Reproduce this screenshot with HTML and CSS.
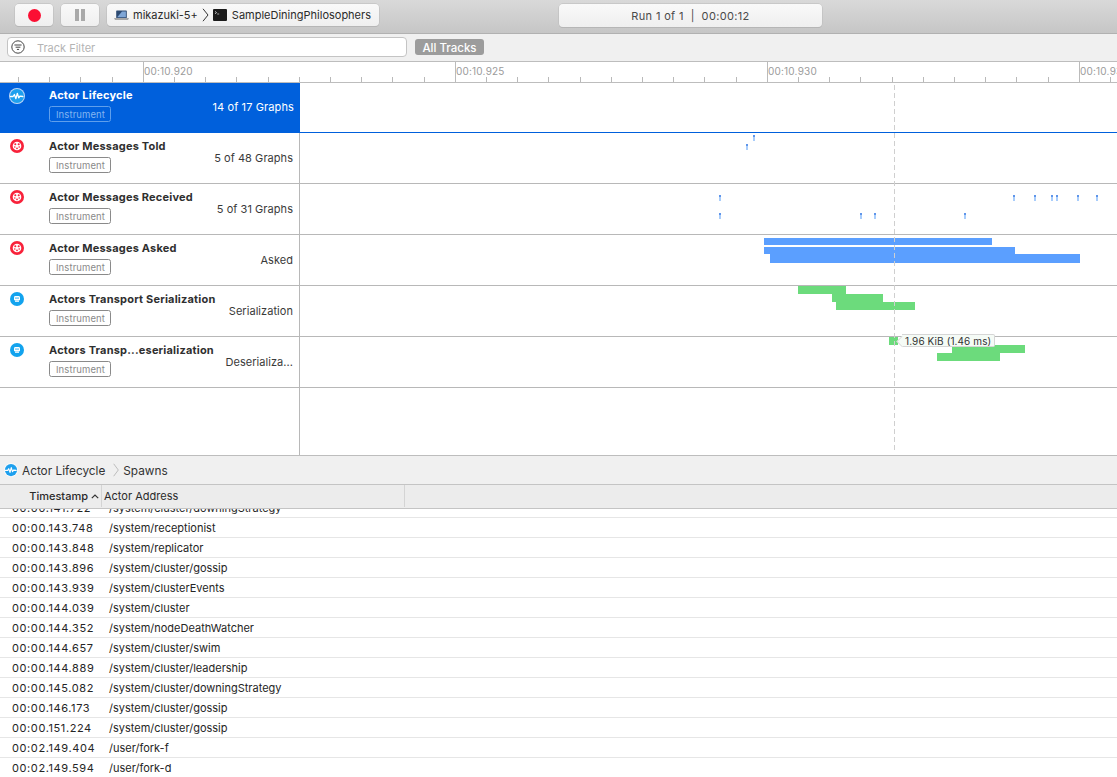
FILE: index.html
```html
<!DOCTYPE html>
<html lang="en">
<head>
<meta charset="utf-8">
<title>Instruments</title>
<link rel="stylesheet" href="styles.css">
</head>
<body>
<svg class="defs" width="0" height="0" aria-hidden="true">
  <symbol id="i-pulse" viewBox="0 0 16 16">
    <circle cx="8" cy="8" r="8" fill="#fff" fill-opacity=".75"/>
    <circle cx="8" cy="8" r="7" fill="#1ea0ee"/>
    <path d="M1.5 8.5h2.6l1.3-2 1.5 4.2 1.4-5.4 1.4 4.6 1.2-1.7 3 .3" fill="none" stroke="#fff" stroke-width="1.3" stroke-linejoin="round" stroke-linecap="round"/>
  </symbol>
  <symbol id="i-paw" viewBox="0 0 14 14">
    <circle cx="7" cy="7" r="7" fill="#f8223a"/>
    <circle cx="7" cy="7" r="4.3" fill="#fff"/>
    <circle cx="5.3" cy="5.2" r="1.05" fill="#f8223a"/>
    <circle cx="8.7" cy="5.2" r="1.05" fill="#f8223a"/>
    <circle cx="4.8" cy="8" r=".8" fill="#f8223a"/>
    <circle cx="9.2" cy="8" r=".8" fill="#f8223a"/>
    <circle cx="7" cy="9.3" r=".9" fill="#f8223a"/>
  </symbol>
  <symbol id="i-net" viewBox="0 0 14 14">
    <circle cx="7" cy="7" r="7" fill="#12a3ee"/>
    <rect x="4" y="4" width="6" height="4.6" rx="1.4" fill="#fff"/>
    <rect x="5.4" y="5.4" width="1.2" height="1.4" fill="#12a3ee"/>
    <rect x="7.4" y="5.4" width="1.2" height="1.4" fill="#12a3ee"/>
    <rect x="5" y="8.6" width="4" height="1.2" fill="#fff"/>
  </symbol>
</svg>

<header class="toolbar">
  <button class="tool-btn" type="button"><span class="record-dot"></span></button>
  <button class="tool-btn" type="button"><span class="pause-bar"></span><span class="pause-bar"></span></button>
  <div class="target">
    <svg class="laptop" viewBox="0 0 15 10" width="15" height="10">
      <rect x="2.2" y=".5" width="10.6" height="7.5" rx=".6" fill="#2c4a72"/>
      <path d="M3.2 7.2 8 1.4h3.9v5.8z" fill="#7fa6d6"/>
      <path d="M0 8.2h15l-1 1.6H1z" fill="#8c8c8c"/>
    </svg>
    <span class="target-text">mikazuki-5+</span>
    <svg class="crumb-chevron" viewBox="0 0 7 14" width="7" height="14"><path d="M1 .8 6 7l-5 6.2" fill="none" stroke="#333" stroke-width="1"/></svg>
    <svg class="terminal" viewBox="0 0 14 12" width="14" height="12">
      <rect width="14" height="12" rx="1" fill="#1b1b1b"/>
      <path d="M2 2.4 3.6 3.6 2 4.8" fill="none" stroke="#ddd" stroke-width=".8"/>
      <path d="M4.2 5h2" stroke="#ddd" stroke-width=".7"/>
    </svg>
    <span class="target-text">SampleDiningPhilosophers</span>
  </div>
  <div class="run-status">Run 1 of 1&nbsp;&nbsp;|&nbsp;&nbsp;00:00:12</div>
</header>

<div class="filterbar">
  <div class="filter-input">
    <svg class="filter-icon" viewBox="0 0 14 14" width="14" height="14">
      <circle cx="7" cy="7" r="6.2" fill="none" stroke="#444" stroke-width="1"/>
      <path d="M3.4 5h7.2M4.6 7.2h4.8M5.9 9.4h2.2" stroke="#444" stroke-width="1" fill="none"/>
    </svg>
    <span class="filter-placeholder">Track Filter</span>
  </div>
  <span class="all-tracks">All Tracks</span>
</div>

<div class="ruler">
  <span class="ruler-label" style="left:144px">00:10.920</span>
  <span class="ruler-label" style="left:456px">00:10.925</span>
  <span class="ruler-label" style="left:768px">00:10.930</span>
  <span class="ruler-label" style="left:1080px">00:10.935</span>
</div>

<section class="tracks">
  <div class="track track-selected">
    <div class="track-info">
      <svg class="track-icon track-icon-large"><use href="#i-pulse"/></svg>
      <div class="track-names">
        <div class="track-title">Actor Lifecycle</div>
        <div class="badge">Instrument</div>
      </div>
      <div class="track-meta">14 of 17 Graphs</div>
    </div>
    <div class="lane"></div>
  </div>

  <div class="track">
    <div class="track-info">
      <svg class="track-icon"><use href="#i-paw"/></svg>
      <div class="track-names">
        <div class="track-title">Actor Messages Told</div>
        <div class="badge">Instrument</div>
      </div>
      <div class="track-meta">5 of 48 Graphs</div>
    </div>
    <div class="lane">
      <i class="tick" style="left:453px;top:2px"></i>
      <i class="tick" style="left:446px;top:11px"></i>
    </div>
  </div>

  <div class="track">
    <div class="track-info">
      <svg class="track-icon"><use href="#i-paw"/></svg>
      <div class="track-names">
        <div class="track-title">Actor Messages Received</div>
        <div class="badge">Instrument</div>
      </div>
      <div class="track-meta">5 of 31 Graphs</div>
    </div>
    <div class="lane">
      <i class="tick" style="left:419px;top:11px"></i>
      <i class="tick" style="left:713px;top:11px"></i>
      <i class="tick" style="left:734px;top:11px"></i>
      <i class="tick" style="left:751px;top:11px"></i>
      <i class="tick" style="left:756px;top:11px"></i>
      <i class="tick" style="left:777px;top:11px"></i>
      <i class="tick" style="left:796px;top:11px"></i>
      <i class="tick" style="left:419px;top:29px"></i>
      <i class="tick" style="left:560px;top:29px"></i>
      <i class="tick" style="left:574px;top:29px"></i>
      <i class="tick" style="left:664px;top:29px"></i>
    </div>
  </div>

  <div class="track">
    <div class="track-info">
      <svg class="track-icon"><use href="#i-paw"/></svg>
      <div class="track-names">
        <div class="track-title">Actor Messages Asked</div>
        <div class="badge">Instrument</div>
      </div>
      <div class="track-meta">Asked</div>
    </div>
    <div class="lane">
      <i class="bar bar-blue" style="left:464px;top:3px;width:228px;height:7px"></i>
      <i class="bar bar-blue" style="left:464px;top:12px;width:251px;height:7px"></i>
      <i class="bar bar-blue" style="left:470px;top:19px;width:310px;height:9px"></i>
    </div>
  </div>

  <div class="track">
    <div class="track-info">
      <svg class="track-icon"><use href="#i-net"/></svg>
      <div class="track-names">
        <div class="track-title">Actors Transport Serialization</div>
        <div class="badge">Instrument</div>
      </div>
      <div class="track-meta">Serialization</div>
    </div>
    <div class="lane">
      <i class="bar bar-green" style="left:498px;top:0;width:48px;height:8px"></i>
      <i class="bar bar-green" style="left:532px;top:8px;width:51px;height:8px"></i>
      <i class="bar bar-green" style="left:536px;top:16px;width:79px;height:8px"></i>
    </div>
  </div>

  <div class="track">
    <div class="track-info">
      <svg class="track-icon"><use href="#i-net"/></svg>
      <div class="track-names">
        <div class="track-title">Actors Transp...eserialization</div>
        <div class="badge">Instrument</div>
      </div>
      <div class="track-meta">Deserializa...</div>
    </div>
    <div class="lane">
      <i class="bar bar-green" style="left:589px;top:0;width:9px;height:8px"></i>
      <i class="bar bar-green" style="left:652px;top:8px;width:73px;height:8px"></i>
      <i class="bar bar-green" style="left:637px;top:16px;width:63px;height:8px"></i>
      <div class="lane-tooltip">1.96 KiB (1.46 ms)</div>
    </div>
  </div>

  <div class="track-fill"><div class="track-fill-side"></div></div>
  <div class="playhead"></div>
</section>

<div class="detail-bar">
  <svg class="detail-icon"><use href="#i-pulse"/></svg>
  <span class="detail-crumb">Actor Lifecycle</span>
  <svg class="detail-chevron" viewBox="0 0 6 14" width="6" height="14"><path d="M.7 .8 5.3 7 .7 13.2" fill="none" stroke="#bdbdbd" stroke-width="1"/></svg>
  <span class="detail-crumb">Spawns</span>
</div>

<div class="table-head">
  <div class="col-time">Timestamp<svg class="sort-caret" viewBox="0 0 8 5" width="8" height="5"><path d="M.8 4.2 4 1l3.2 3.2" fill="none" stroke="#333" stroke-width="1.2"/></svg></div>
  <div class="col-addr">Actor Address</div>
</div>

<div class="table-body">
  <div class="rows">
    <div class="row"><span class="cell-time">00:00.141.722</span><span>/system/cluster/downingStrategy</span></div>
    <div class="row"><span class="cell-time">00:00.143.748</span><span>/system/receptionist</span></div>
    <div class="row"><span class="cell-time">00:00.143.848</span><span>/system/replicator</span></div>
    <div class="row"><span class="cell-time">00:00.143.896</span><span>/system/cluster/gossip</span></div>
    <div class="row"><span class="cell-time">00:00.143.939</span><span>/system/clusterEvents</span></div>
    <div class="row"><span class="cell-time">00:00.144.039</span><span>/system/cluster</span></div>
    <div class="row"><span class="cell-time">00:00.144.352</span><span>/system/nodeDeathWatcher</span></div>
    <div class="row"><span class="cell-time">00:00.144.657</span><span>/system/cluster/swim</span></div>
    <div class="row"><span class="cell-time">00:00.144.889</span><span>/system/cluster/leadership</span></div>
    <div class="row"><span class="cell-time">00:00.145.082</span><span>/system/cluster/downingStrategy</span></div>
    <div class="row"><span class="cell-time">00:00.146.173</span><span>/system/cluster/gossip</span></div>
    <div class="row"><span class="cell-time">00:00.151.224</span><span>/system/cluster/gossip</span></div>
    <div class="row"><span class="cell-time">00:02.149.404</span><span>/user/fork-f</span></div>
    <div class="row"><span class="cell-time">00:02.149.594</span><span>/user/fork-d</span></div>
  </div>
</div>
</body>
</html>
```

FILE: styles.css
```css
* { box-sizing: border-box; }
html, body { margin: 0; padding: 0; height: 100%; }
body {
  display: flex;
  flex-direction: column;
  height: 777px;
  overflow: hidden;
  background: #fff;
  color: #2a2a2a;
  font-family: Inter, "Liberation Sans", sans-serif;
  font-size: 11px;
}
.defs { position: absolute; }

/* toolbar */
.toolbar {
  flex: 0 0 34px;
  display: flex;
  align-items: flex-start;
  padding: 4px 0 0 15px;
  gap: 8px;
  background: linear-gradient(#d9d9d9, #c6c6c6);
  border-bottom: 1px solid #b1b1b1;
}
.tool-btn {
  width: 38px;
  height: 22px;
  padding: 0;
  display: flex;
  align-items: center;
  justify-content: center;
  gap: 2px;
  border: 0;
  border-radius: 4px;
  background: linear-gradient(#f9f9f9, #efefef);
  box-shadow: 0 0 0 .5px #b9b9b9, 0 1px 0 #b3b3b3;
}
.record-dot { width: 13px; height: 13px; border-radius: 50%; background: #fb0f33; }
.pause-bar { width: 4px; height: 12px; background: #a9a9a9; }
.target {
  width: 272px;
  height: 22px;
  display: flex;
  align-items: center;
  padding-left: 7px;
  border-radius: 4px;
  background: linear-gradient(#f9f9f9, #efefef);
  box-shadow: 0 0 0 .5px #b9b9b9, 0 1px 0 #b3b3b3;
}
.target-text { font-size: 11px; color: #2b2b2b; white-space: nowrap; }
.laptop { margin-right: 4px; }
.crumb-chevron { margin: 0 4px 0 4px; }
.terminal { margin-right: 5px; }
.run-status {
  margin-left: 172px;
  width: 263px;
  height: 23px;
  display: flex;
  align-items: center;
  justify-content: center;
  border-radius: 4px;
  font-size: 11px;
  letter-spacing: .35px;
  color: #4a4a4a;
  background: linear-gradient(#f9f9f9, #efefef);
  box-shadow: 0 0 0 .5px #b9b9b9, 0 1px 0 #b3b3b3;
}

/* filter bar */
.filterbar {
  flex: 0 0 28px;
  display: flex;
  align-items: center;
  padding: 0 0 1px 7px;
  background: #f0f0f0;
  border-bottom: 1px solid #bdbdbd;
}
.filter-input {
  width: 400px;
  height: 20px;
  display: flex;
  align-items: center;
  padding-left: 3px;
  background: #fff;
  border: 1px solid #c4c4c4;
  border-radius: 4px;
}
.filter-icon { flex: none; }
.filter-placeholder { margin-left: 12px; padding-top: 1px; font-size: 11px; color: #b4b4b4; }
.all-tracks {
  margin-left: 8px;
  width: 69px;
  height: 16px;
  display: flex;
  align-items: center;
  justify-content: center;
  padding-top: 1px;
  border-radius: 3px;
  background: #9c9c9c;
  color: #fff;
  font-size: 11.5px;
  font-weight: 500;
}

/* ruler */
.ruler {
  position: relative;
  flex: 0 0 21px;
  overflow: hidden;
  border-bottom: 1px solid #bdbdbd;
  background:
    repeating-linear-gradient(90deg, #bbb 0 1px, transparent 1px 312px) 143px 0 / 100% 100% no-repeat,
    repeating-linear-gradient(90deg, #b9b9b9 0 1px, transparent 1px 31.2px) 18px 100% / 100% 5px no-repeat,
    #fff;
}
.ruler-label {
  position: absolute;
  top: 3px;
  font-size: 10px;
  line-height: 13px;
  letter-spacing: .2px;
  color: #9b9b9b;
  white-space: nowrap;
}

/* tracks */
.tracks {
  position: relative;
  flex: 0 0 373px;
  display: flex;
  flex-direction: column;
  border-bottom: 1px solid #bdbdbd;
}
.track {
  flex: 0 0 51px;
  display: flex;
  border-bottom: 1px solid #b8b8b8;
}
.track-info {
  flex: 0 0 300px;
  display: flex;
  align-items: flex-start;
  padding: 6px 6px 0 10px;
  border-right: 1px solid #b8b8b8;
}
.track-icon { flex: none; width: 14px; height: 14px; margin-right: 25px; }
.track-icon-large { width: 16px; height: 16px; margin: 0 24px 0 -1px; }
.track-names { flex: none; }
.track-title {
  font-size: 11px;
  line-height: 14px;
  font-weight: 700;
  letter-spacing: .19px;
  color: #2f2f2f;
  white-space: nowrap;
}
.badge {
  width: 62px;
  height: 16px;
  margin-top: 4px;
  display: flex;
  align-items: center;
  justify-content: center;
  padding-left: 1px;
  border: 1px solid #8a8a8a;
  border-radius: 2.5px;
  font-size: 9.5px;
  color: #8a8a8a;
  letter-spacing: .1px;
}
.track-meta {
  margin-left: auto;
  padding-top: 12px;
  font-size: 11px;
  line-height: 14px;
  letter-spacing: .05px;
  color: #3a3a3a;
  white-space: nowrap;
}
.track-selected { flex-basis: 50px; border-bottom-color: #0060dc; }
.track-selected .track-info {
  padding: 5px 5px 0 10px;
  background: #0060dc;
  border-right-color: #0060dc;
}
.track-selected .track-title, .track-selected .track-meta { color: #fff; }
.track-selected .track-meta { letter-spacing: .12px; }
.track-selected .badge { border-color: #5f9fec; color: #83b5f1; }
.lane { position: relative; flex: 1; }
.tick {
  position: absolute;
  width: 2px;
  height: 6px;
  background: linear-gradient(#5f95ea 0 2px, #a9cdfb 2px);
}
.bar { position: absolute; }
.bar-blue { background: #5b9fff; }
.bar-green { background: #6cdb7c; }
.lane-tooltip {
  position: absolute;
  left: 602px;
  top: -3px;
  width: 93px;
  height: 13px;
  padding-left: 3px;
  font-size: 10px;
  line-height: 12px;
  letter-spacing: .1px;
  color: #333;
  white-space: nowrap;
  background: #f5fbf6;
  border: 1px solid #d6d6d6;
  border-left: 0;
  border-radius: 0 2px 2px 0;
}
.lane-tooltip::before {
  content: "";
  position: absolute;
  left: -4px;
  top: 1.5px;
  width: 8px;
  height: 8px;
  background: #f5fbf6;
  border-left: 1px solid #d6d6d6;
  border-bottom: 1px solid #d6d6d6;
  clip-path: polygon(0 0, 0 100%, 100% 100%);
  transform: rotate(45deg);
}
.track-fill { flex: 1; }
.track-fill-side { width: 300px; height: 100%; border-right: 1px solid #b8b8b8; }
.playhead {
  position: absolute;
  left: 894px;
  top: 2px;
  bottom: 5px;
  width: 1px;
  background: repeating-linear-gradient(#cfcfcf 0 5px, transparent 5px 8px);
}

/* detail */
.detail-bar {
  flex: 0 0 29px;
  display: flex;
  align-items: center;
  padding-left: 4px;
  background: #f0f0f0;
  border-bottom: 1px solid #c4c4c4;
}
.detail-icon { width: 14px; height: 14px; margin-right: 4px; }
.detail-crumb { padding-top: 1px; font-size: 11.8px; color: #333; }
.detail-chevron { margin: 0 4px 0 8px; }
.table-head {
  flex: 0 0 24px;
  display: flex;
  align-items: stretch;
  padding-bottom: 1px;
  background: #ececec;
  border-bottom: 1px solid #c4c4c4;
  font-size: 11px;
  color: #2a2a2a;
}
.col-time {
  flex: 0 0 102px;
  display: flex;
  align-items: center;
  justify-content: flex-end;
  padding-right: 2px;
  font-weight: 500;
  border-right: 1px solid #d4d4d4;
}
.sort-caret { margin-left: 3px; }
.col-addr {
  flex: 0 0 303px;
  display: flex;
  align-items: center;
  padding-left: 2px;
  border-right: 1px solid #d4d4d4;
}
.table-body { flex: 1; overflow: hidden; }
.rows { margin-top: -11px; }
.row {
  height: 20px;
  display: flex;
  align-items: center;
  padding-left: 12px;
  border-bottom: 1px solid #e6e6e6;
  font-size: 11px;
  color: #252525;
  white-space: nowrap;
}
.cell-time { flex: 0 0 97px; letter-spacing: .6px; }
```
